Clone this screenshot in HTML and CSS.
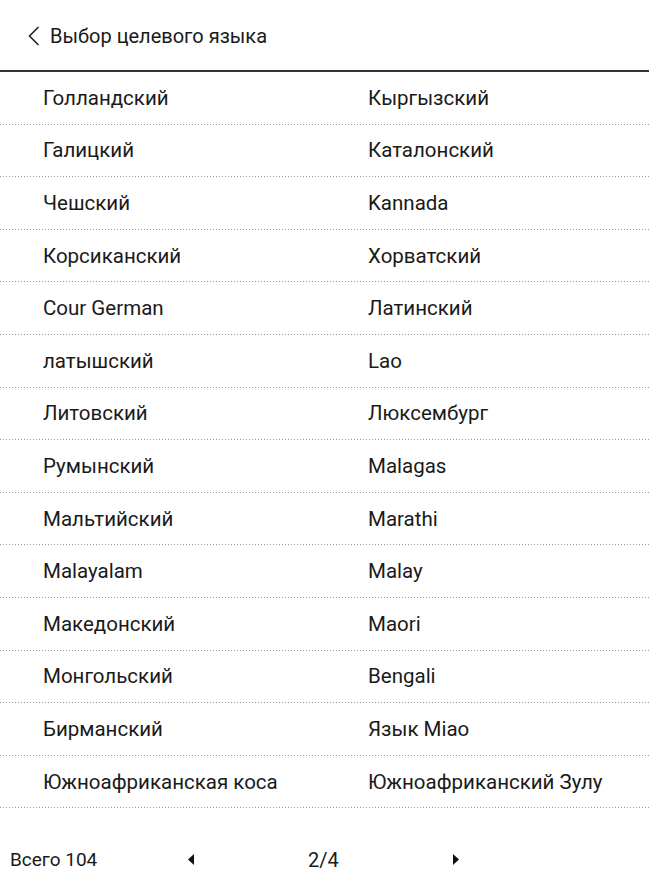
FILE: index.html
```html
<!DOCTYPE html>
<html lang="ru">
<head>
<meta charset="utf-8">
<title>Выбор целевого языка</title>
<link rel="stylesheet" href="styles.css">
</head>
<body>
<div class="page">
  <header class="header">
    <svg class="back" width="14" height="20" viewBox="0 0 14 20"><path d="M11.5 1 L2.5 10 L11.5 19" fill="none" stroke="#222" stroke-width="1.6"/></svg>
    <span class="title">Выбор целевого языка</span>
  </header>
  <ul class="list">
    <li class="row"><span>Голландский</span><span>Кыргызский</span></li>
    <li class="row"><span>Галицкий</span><span>Каталонский</span></li>
    <li class="row"><span>Чешский</span><span>Kannada</span></li>
    <li class="row"><span>Корсиканский</span><span>Хорватский</span></li>
    <li class="row"><span>Cour German</span><span>Латинский</span></li>
    <li class="row"><span>латышский</span><span>Lao</span></li>
    <li class="row"><span>Литовский</span><span>Люксембург</span></li>
    <li class="row"><span>Румынский</span><span>Malagas</span></li>
    <li class="row"><span>Мальтийский</span><span>Marathi</span></li>
    <li class="row"><span>Malayalam</span><span>Malay</span></li>
    <li class="row"><span>Македонский</span><span>Maori</span></li>
    <li class="row"><span>Монгольский</span><span>Bengali</span></li>
    <li class="row"><span>Бирманский</span><span>Язык Miao</span></li>
    <li class="row"><span>Южноафриканская коса</span><span>Южноафриканский Зулу</span></li>
  </ul>
  <footer class="footer">
    <span class="total">Всего 104</span>
    <svg class="arrow" width="6" height="11" viewBox="0 0 6 11"><path d="M6 0 L0 5.5 L6 11 Z" fill="#111"/></svg>
    <span class="pages">2/4</span>
    <svg class="arrow" width="6" height="11" viewBox="0 0 6 11"><path d="M0 0 L6 5.5 L0 11 Z" fill="#111"/></svg>
  </footer>
</div>
</body>
</html>
```
FILE: styles.css
```css
* { box-sizing: border-box; }
html, body { margin: 0; padding: 0; background: #fff; }
body {
  font-family: Roboto, "Noto Sans", "DejaVu Sans", sans-serif;
  color: #1a1a1a;
  width: 649px;
  height: 877px;
  overflow: hidden;
}
.page { display: flex; flex-direction: column; height: 877px; }
.header {
  height: 72px;
  flex: none;
  border-bottom: 2px solid #333;
  display: flex;
  align-items: center;
  padding-left: 27px;
  gap: 9px;
  padding-top: 2px;
}
.back { display: block; }
.title { font-size: 20px; }
.list { list-style: none; margin: 0; padding: 0; flex: none; }
.row {
  height: 52.6px;
  display: grid;
  grid-template-columns: 325px 1fr;
  align-items: center;
  padding-left: 43px;
  padding-bottom: 1px;
  font-size: 20.5px;
  background-image: linear-gradient(to right, #9a9a9a 1px, transparent 1px);
  background-size: 3px 1px;
  background-repeat: repeat-x;
  background-position: 0 bottom;
}
.footer {
  flex: 1;
  display: grid;
  grid-template-columns: 178px 120px 145px 6px;
  align-items: center;
  padding-left: 10px;
  padding-top: 34px;
  font-size: 19px;
}
.pages { font-size: 20px; }
.arrow { display: block; }
```
